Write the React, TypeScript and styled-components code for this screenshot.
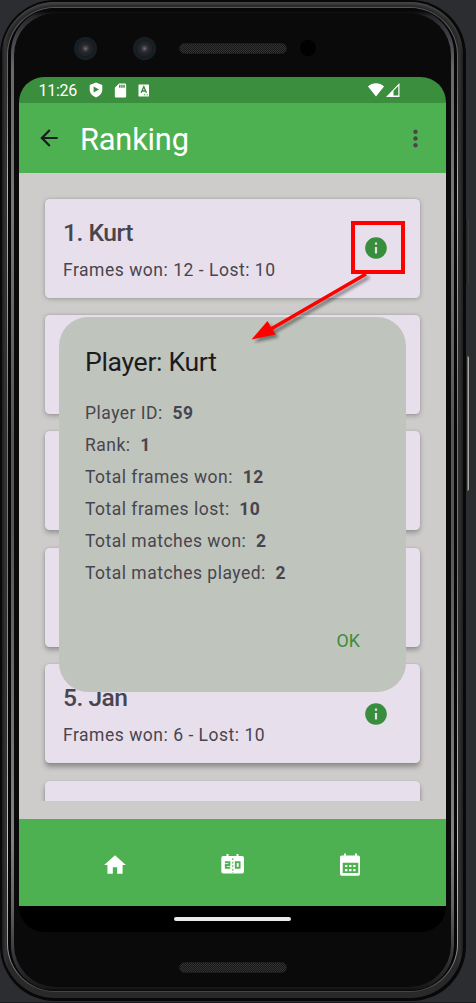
import React from "react";
import styled, { createGlobalStyle } from "styled-components";
import { MdHome, MdInfo, MdSdCard, MdMoreVert, MdArrowBack } from "react-icons/md";

const GlobalStyle = createGlobalStyle`
  * { box-sizing: border-box; }
  body { margin: 0; background: #2b2d31; font-family: Roboto, sans-serif; overflow: hidden; }
  p, h1, h2, h3 { margin: 0; font-weight: 400; }
`;

const Desk = styled.div`
  position: relative;
  width: 476px;
  height: 1003px;
  overflow: hidden;
  background: #2b2d31;
  border-bottom: 1px solid #1c1b20;
`;

const Shell = styled.div`
  width: 466px;
  height: 1001px;
  padding: 2px 3px 3px 2px;
  border-radius: 55px;
  background: #080808;
`;

const Rim = styled.div`
  height: 100%;
  padding: 5px 5px 6px 5px;
  border-radius: 53px;
  background: linear-gradient(90deg, #161616 0, #343434 3px, #292929 6px, #292929 calc(100% - 6px), #303030 calc(100% - 3px), #181818 100%);
  box-shadow: inset 0 3px 3px -1px #4a4a4a;
`;

const Edge = styled.div`
  height: 100%;
  padding: 1px;
  border-radius: 48px;
  background: linear-gradient(#565656 0, #696969 70px, #b5b5b5 180px, #777 430px, #777 560px, #c5c5c5 850px, #999 940px, #444 100%);
`;

const Gap = styled.div`
  height: 100%;
  padding: 0 3px;
  border-radius: 47px;
  background: #060606;
`;

const Bevel = styled.div`
  height: 100%;
  padding: 5px 3px 4px;
  border-radius: 45px;
  background: linear-gradient(#080808 3px, #25252a 8px, #68686f 60px, #77777d 200px, #55555b 430px, #55555b 520px, #828289 830px, #626269 900px, #18181b 980px, #090909 100%);
`;

const Face = styled.div`
  height: 100%;
  display: flex;
  flex-direction: column;
  padding: 0 3px 0 5px;
  border-radius: 42px;
  background: #0a0a0a;
`;

const TopBezel = styled.div`
  flex: 0 0 64px;
  display: flex;
  align-items: center;
  padding: 6px 0 0 55px;
`;

const Lens = styled.div`
  width: 23px;
  height: 23px;
  margin-right: 35.5px;
  border-radius: 50%;
  background: radial-gradient(circle, #777 0, #4a4a50 1.5px, #27272d 4px, #222 7px, #161d22 8px, #172027 11px);
`;

const Sensor = styled.div`
  width: 16px;
  height: 16px;
  margin-left: 13px;
  border-radius: 50%;
  background: #010103;
`;

const Speaker = styled.div<{ $inset?: number }>`
  width: 108px;
  height: 11px;
  margin-left: ${(p) => p.$inset}px;
  border-radius: 6px;
  border: 1px solid #1e1e1e;
  background: repeating-conic-gradient(#353535 0 25%, #151515 0 50%) 0 0 / 2px 2px;
`;

const Screen = styled.div`
  position: relative;
  flex: 0 0 855px;
  display: flex;
  flex-direction: column;
  width: 427px;
  overflow: hidden;
  border-radius: 25px;
  background: #000;
`;

const StatusBar = styled.div`
  flex: 0 0 26px;
  display: flex;
  align-items: center;
  padding: 0 46px 0 19.5px;
  color: #fff;
  background: #3a8e3d;
`;

const Clock = styled.span`
  width: 50px;
  padding-top: 1px;
  font-size: 16px;
  letter-spacing: -0.3px;
`;

const StatusIcons = styled.div`
  display: flex;
  align-items: center;
  gap: 9px;
`;

const Signals = styled.div`
  display: flex;
  gap: 2px;
  margin-left: auto;
`;

const AppBar = styled.header`
  flex: 0 0 70px;
  display: flex;
  align-items: center;
  padding: 0 17px 0 17px;
  background: #4db151;
  svg { flex: none; }
`;

const AppTitle = styled.h1`
  flex: 1;
  margin-left: 18px;
  padding-top: 3px;
  color: #fff;
  font-size: 30.8px;
  letter-spacing: -0.2px;
  line-height: 36px;
`;

const Content = styled.main`
  flex: 0 0 646px;
  padding: 19px 19px 18px;
  background: #cdccca;
`;

const PlayerList = styled.div`
  height: 609px;
  padding: 6.6px 7px;
  overflow: hidden;
`;

const PlayerCard = styled.article<{ $depth: number }>`
  height: 99px;
  display: flex;
  align-items: center;
  margin-bottom: 17.4px;
  padding: 0 31px 0 18px;
  border-radius: 4.5px;
  color: #49454f;
  background: #e7dfeb;
  box-shadow: 0 ${(p) => 1 + p.$depth * 0.6}px 5px rgba(0, 0, 0, ${(p) => 0.22 + p.$depth * 0.02}), 0 0 2px rgba(0, 0, 0, 0.12);
`;

const CardText = styled.div`
  flex: 1;
`;

const PlayerName = styled.h2`
  font-size: 24.6px;
  font-weight: 500;
  letter-spacing: -0.5px;
  line-height: 35px;
`;

const FrameScore = styled.p`
  margin-top: 8px;
  font-size: 17.5px;
  letter-spacing: 0.52px;
  line-height: 24px;
`;

const TabBar = styled.nav`
  flex: 0 0 87px;
  display: grid;
  grid-template-columns: repeat(3, 117.5px);
  justify-content: center;
  align-items: center;
  justify-items: center;
  padding-top: 5px;
  color: #fff;
  background: #4db151;
`;

const GestureArea = styled.div`
  flex: 1;
  display: flex;
  justify-content: center;
  align-items: center;
`;

const GestureBar = styled.div`
  width: 117.5px;
  height: 4px;
  border-radius: 2px;
  background: #ebe8e8;
`;

const BottomBezel = styled.div`
  flex: 1;
  display: flex;
  padding-top: 30px;
`;

const Dialog = styled.section`
  position: absolute;
  left: 40px;
  top: 240px;
  width: 347px;
  height: 375px;
  display: flex;
  flex-direction: column;
  padding: 26px 26px 38px;
  border-radius: 29px;
  background: #bfc4bc;
`;

const DialogTitle = styled.h2`
  margin-bottom: 16.500px;
  color: #1c1b1f;
  font-size: 26.6px;
  letter-spacing: -0.33px;
  line-height: 37px;
`;

const Detail = styled.p`
  color: #49454f;
  font-size: 17.5px;
  line-height: 32px;
  letter-spacing: 0.49px;
  white-space: pre;
  b { font-weight: 700; }
`;

const DialogAction = styled.button`
  margin: auto 20px 0 auto;
  padding: 0;
  border: 0;
  color: #388e3c;
  background: none;
  font: 400 17.8px/26px Roboto, sans-serif;
  letter-spacing: 0;
`;

const Highlight = styled.div`
  position: absolute;
  left: 351px;
  top: 221px;
  width: 54px;
  height: 53px;
  border: 4px solid #f00;
`;

const ArrowOverlay = styled.svg`
  position: absolute;
  left: 240px;
  top: 262px;
`;

const SideButton = styled.div<{ $top: number; $height: number; $tone: string }>`
  position: absolute;
  left: 466px;
  top: ${(p) => p.$top}px;
  width: 3px;
  height: ${(p) => p.$height}px;
  border-radius: 0 2px 2px 0;
  background: linear-gradient(90deg, #242424 1px, ${(p) => p.$tone} 2px);
`;

const players = [
  { name: "Kurt", won: 12, lost: 10 },
  { name: "", won: 0, lost: 0 },
  { name: "", won: 0, lost: 0 },
  { name: "", won: 0, lost: 0 },
  { name: "Jan", won: 6, lost: 10 },
  { name: "", won: 0, lost: 0 },
];

const details: [string, number][] = [
  ["Player ID", 59],
  ["Rank", 1],
  ["Total frames won", 12],
  ["Total frames lost", 10],
  ["Total matches won", 2],
  ["Total matches played", 2],
];

const ShieldIcon = () => (
  <svg width="14" height="16" viewBox="0 0 14 16">
    <path d="M7 .5 13.3 3v4.5c0 3.6-2.5 6.5-6.3 8-3.8-1.5-6.3-4.4-6.3-8V3Z" fill="#fff" />
    <path d="M4.6 4.5v6L10 7.5Z" fill="#3a8e3d" />
  </svg>
);

const LetterIcon = () => (
  <svg width="12" height="13" viewBox="0 0 12 13">
    <rect x=".5" y=".5" width="10.5" height="12" rx=".6" fill="#fff" />
    <path d="m3.2 8.8 2.6-6 2.6 6M4.2 7h3.2" fill="none" stroke="#3a8e3d" strokeWidth="1.4" />
    <path d="M5.8 10.8h1.3M8.5 10.8h1.3" stroke="#3a8e3d" />
  </svg>
);

const WifiIcon = () => (
  <svg width="16" height="14" viewBox="0 0 16 14">
    <path d="M0 3.5C4.5-.7 11.5-.7 16 3.5L8 13.5Z" fill="#fff" />
  </svg>
);

const CellularIcon = () => (
  <svg width="14" height="14" viewBox="0 0 14 14">
    <path d="M13.5 0v14H0ZM12.3 3v9.5H7.5V7.8Z" fill="#fff" fillRule="evenodd" />
  </svg>
);

const ScoreboardIcon = () => (
  <svg width="26" height="26" viewBox="0 0 26 26">
    <path d="M6.500 2h2v2h8V2h2v2h3.600q1.900 0 1.900 1.900v13.600q0 1.900-1.900 1.900H3.200q-1.900 0-1.900-1.900V5.900Q1.300 4 3.200 4h3.300Z" fill="#fff" />
    <path d="M5 10.200h4.400v2.800H5.800v2.800h4.400" fill="none" stroke="#4db151" strokeWidth="1.900" />
    <rect x="15.800" y="10.200" width="3.800" height="5.600" fill="none" stroke="#4db151" strokeWidth="1.900" />
    <path d="M12.800 6v15" stroke="#4db151" strokeWidth="1" strokeDasharray="2 1.600" />
  </svg>
);

const CalendarIcon = () => (
  <svg width="26" height="26" viewBox="0 0 26 26">
    <path d="M7 1.500h2v2h9v-2h2v2h1.200q1.800 0 1.800 1.800V22q0 1.700-1.800 1.700H4.800Q3 23.700 3 22V5.300Q3 3.500 4.800 3.500H7Z" fill="#fff" />
    <path d="M5.700 10.700h15.600v10.200H5.700Z" fill="#4db151" />
    <path d="M9.200 12.900v6.500M13.300 12.900v6.500M17.400 12.900v6.500" stroke="#fff" strokeWidth="2.300" strokeDasharray="2.200 2" />
  </svg>
);

export default function App() {
  return (
    <Desk>
      <GlobalStyle />
      <SideButton $top={218} $height={66} $tone="#39393b" />
      <SideButton $top={356} $height={135} $tone="#aaa9a3" />
      <Shell><Rim><Edge><Gap><Bevel><Face>
        <TopBezel>
          <Lens />
          <Lens />
          <Speaker $inset={-12} />
          <Sensor />
        </TopBezel>
        <Screen>
          <StatusBar>
            <Clock>11:26</Clock>
            <StatusIcons>
              <ShieldIcon />
              <MdSdCard size={17} color="#fff" />
              <LetterIcon />
            </StatusIcons>
            <Signals><WifiIcon /><CellularIcon /></Signals>
          </StatusBar>
          <AppBar>
            <MdArrowBack size={26} color="#1c1b1f" />
            <AppTitle>Ranking</AppTitle>
            <MdMoreVert size={27} color="#49454f" />
          </AppBar>
          <Content>
            <PlayerList>
              {players.map((player, i) => (
                <PlayerCard key={i} $depth={i}>
                  {player.name && (
                    <>
                      <CardText>
                        <PlayerName>{i + 1}. {player.name}</PlayerName>
                        <FrameScore>Frames won: {player.won} - Lost: {player.lost}</FrameScore>
                      </CardText>
                      <MdInfo size={26} color="#388e3c" />
                    </>
                  )}
                </PlayerCard>
              ))}
            </PlayerList>
          </Content>
          <TabBar>
            <MdHome size={26} />
            <ScoreboardIcon />
            <CalendarIcon />
          </TabBar>
          <GestureArea><GestureBar /></GestureArea>
          <Dialog>
            <DialogTitle>Player: Kurt</DialogTitle>
            {details.map(([label, value]) => (
              <Detail key={label}>{label}:{"  "}<b>{value}</b></Detail>
            ))}
            <DialogAction>OK</DialogAction>
          </Dialog>
        </Screen>
        <BottomBezel><Speaker $inset={160} /></BottomBezel>
      </Face></Bevel></Gap></Edge></Rim></Shell>
      <Highlight />
      <ArrowOverlay width="136" height="86" viewBox="240 262 136 86">
        <g style={{ filter: "drop-shadow(3px 3px 1.5px rgba(0,0,0,.4))" }} fill="#f00">
          <path d="M366 274 271 329" stroke="#f00" strokeWidth="3.6" />
          <path d="M251.5 339.5 267.5 321 275.5 334.5Z" />
        </g>
      </ArrowOverlay>
    </Desk>
  );
}
